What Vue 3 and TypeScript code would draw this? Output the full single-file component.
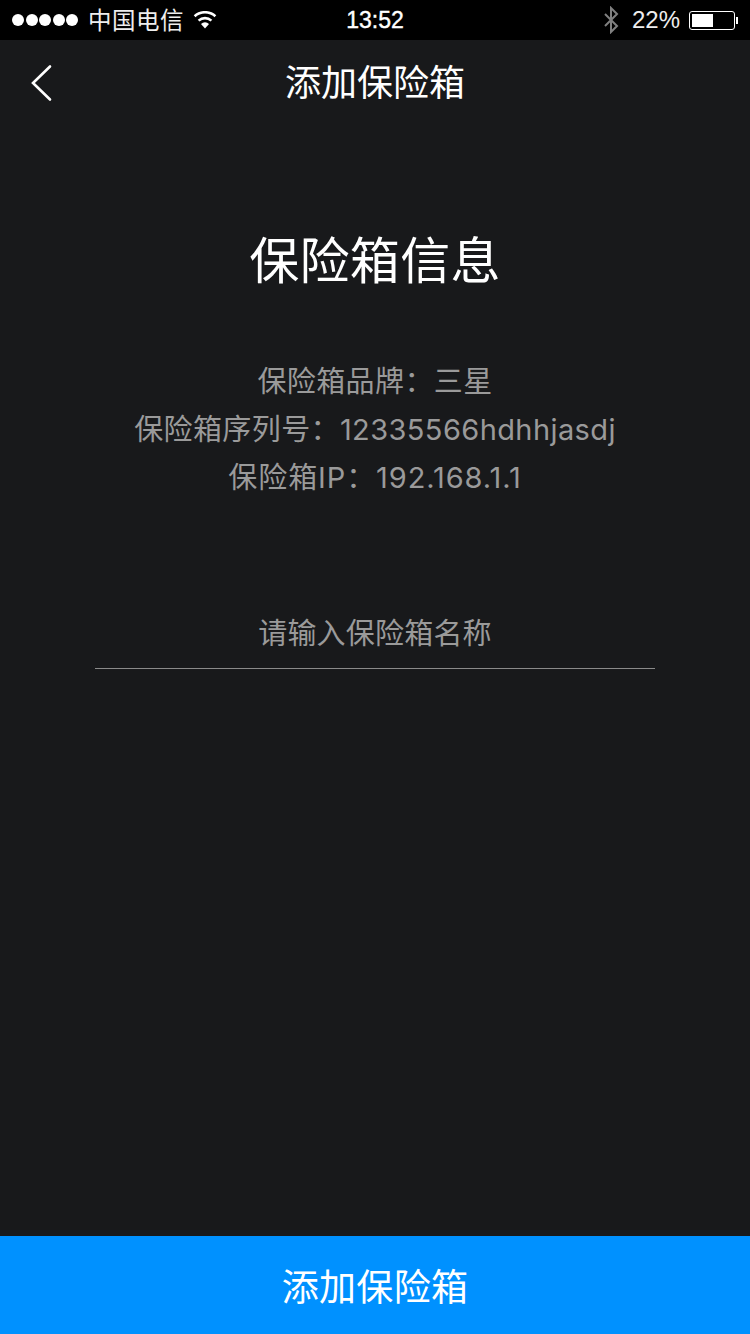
<script setup lang="ts">
const infoLines: string[] = ['保险箱品牌\uFF1A三星', '保险箱序列号\uFF1A12335566hdhhjasdj', '保险箱IP\uFF1A192.168.1.1']
</script>

<template>
  <div class="page">
    <div class="status">
      <div class="status-left">
        <div class="dots"><i v-for="n in 5" :key="n"></i></div>
        <span class="carrier">中国电信</span>
        <svg class="wifi" viewBox="0 0 24 18" width="24" height="18">
          <path d="M12 17.5l-4-4.6a6 6 0 0 1 8 0z" fill="#fff" />
          <path d="M5.6 9.6a9.6 9.6 0 0 1 12.8 0" fill="none" stroke="#fff" stroke-width="2.6" />
          <path d="M1.6 5.2a15.6 15.6 0 0 1 20.8 0" fill="none" stroke="#fff" stroke-width="2.6" />
        </svg>
      </div>
      <div class="time">13:52</div>
      <div class="status-right">
        <svg class="bt" viewBox="0 0 16 28" width="16" height="28">
          <path d="M2 8l12 12-6 6V2l6 6L2 20" fill="none" stroke="#808080" stroke-width="2" />
        </svg>
        <span class="pct">22%</span>
        <div class="battery"><div class="level"></div></div>
        <div class="nub"></div>
      </div>
    </div>

    <div class="nav">
      <svg class="back" viewBox="0 0 24 38" width="24" height="38">
        <path d="M21 2.5L4 19l17 16.5" fill="none" stroke="#fff" stroke-width="2.6" stroke-linecap="round" />
      </svg>
      <div class="nav-title">添加保险箱</div>
    </div>

    <main class="content">
      <h1 class="heading">保险箱信息</h1>
      <div class="info">
        <div v-for="line in infoLines" :key="line" class="info-line">{{ line }}</div>
      </div>
      <div class="field">请输入保险箱名称</div>
    </main>

    <div class="submit">添加保险箱</div>
  </div>
</template>

<style scoped>
.page {
  width: 750px;
  height: 1334px;
  display: flex;
  flex-direction: column;
  background: #18191b;
  font-family: "Liberation Sans", "Noto Sans CJK SC", sans-serif;
  overflow: hidden;
}
.status {
  height: 40px;
  background: #000;
  color: #fff;
  display: grid;
  grid-template-columns: 1fr auto 1fr;
  align-items: center;
  flex: none;
}
.status-left {
  display: flex;
  align-items: center;
  padding-left: 12px;
}
.dots {
  display: flex;
  gap: 1.5px;
}
.dots i {
  width: 12px;
  height: 12px;
  border-radius: 50%;
  background: #fff;
}
.carrier {
  font-size: 23.5px;
  letter-spacing: 0.5px;
  margin-left: 10px;
  color: #eee;
  margin-top: -2px;
}
.wifi {
  margin-left: 9px;
  margin-top: -1px;
}
.time {
  font-size: 23px;
  font-weight: 500;
  -webkit-text-stroke: 0.4px #fff;
}
.status-right {
  display: flex;
  align-items: center;
  justify-content: flex-end;
  padding-right: 12px;
}
.pct {
  font-size: 24px;
  margin-left: 13px;
  color: #eee;
}
.battery {
  width: 46px;
  height: 19px;
  box-sizing: border-box;
  border: 1.5px solid #fff;
  border-radius: 3px;
  padding: 2px;
  margin-left: 9px;
}
.level {
  width: 21px;
  height: 100%;
  background: #fff;
}
.nub {
  width: 2px;
  height: 7px;
  background: #fff;
  margin-left: 1px;
}
.nav {
  height: 86px;
  position: relative;
  display: flex;
  align-items: center;
  justify-content: center;
  flex: none;
}
.back {
  position: absolute;
  left: 29px;
  top: 24px;
}
.nav-title {
  color: #fff;
  font-size: 36px;
  margin-top: -6px;
}
.content {
  flex: 1;
  display: flex;
  flex-direction: column;
  align-items: center;
}
.heading {
  margin: 101px 0 0;
  color: #fff;
  font-size: 50px;
  font-weight: 400;
  line-height: 70px;
  letter-spacing: 0.3px;
}
.info {
  margin-top: 61px;
  text-align: center;
  color: #9a9a9a;
  font-family: Inter, "Noto Sans CJK SC", sans-serif;
  font-weight: 400;
  font-size: 29px;
  letter-spacing: 0.4px;
  line-height: 48px;
}
.info-line:last-child {
  letter-spacing: 0.9px;
}
.field {
  width: 560px;
  margin-top: 108px;
  height: 59px;
  box-sizing: border-box;
  border-bottom: 1px solid #8a8a8a;
  color: #9a9a9a;
  font-size: 29px;
  line-height: 48px;
  letter-spacing: 0.2px;
  text-align: center;
}
.submit {
  height: 98px;
  flex: none;
  background: #0091ff;
  color: #fff;
  font-size: 37px;
  letter-spacing: 0.3px;
  display: flex;
  align-items: center;
  justify-content: center;
}
</style>
